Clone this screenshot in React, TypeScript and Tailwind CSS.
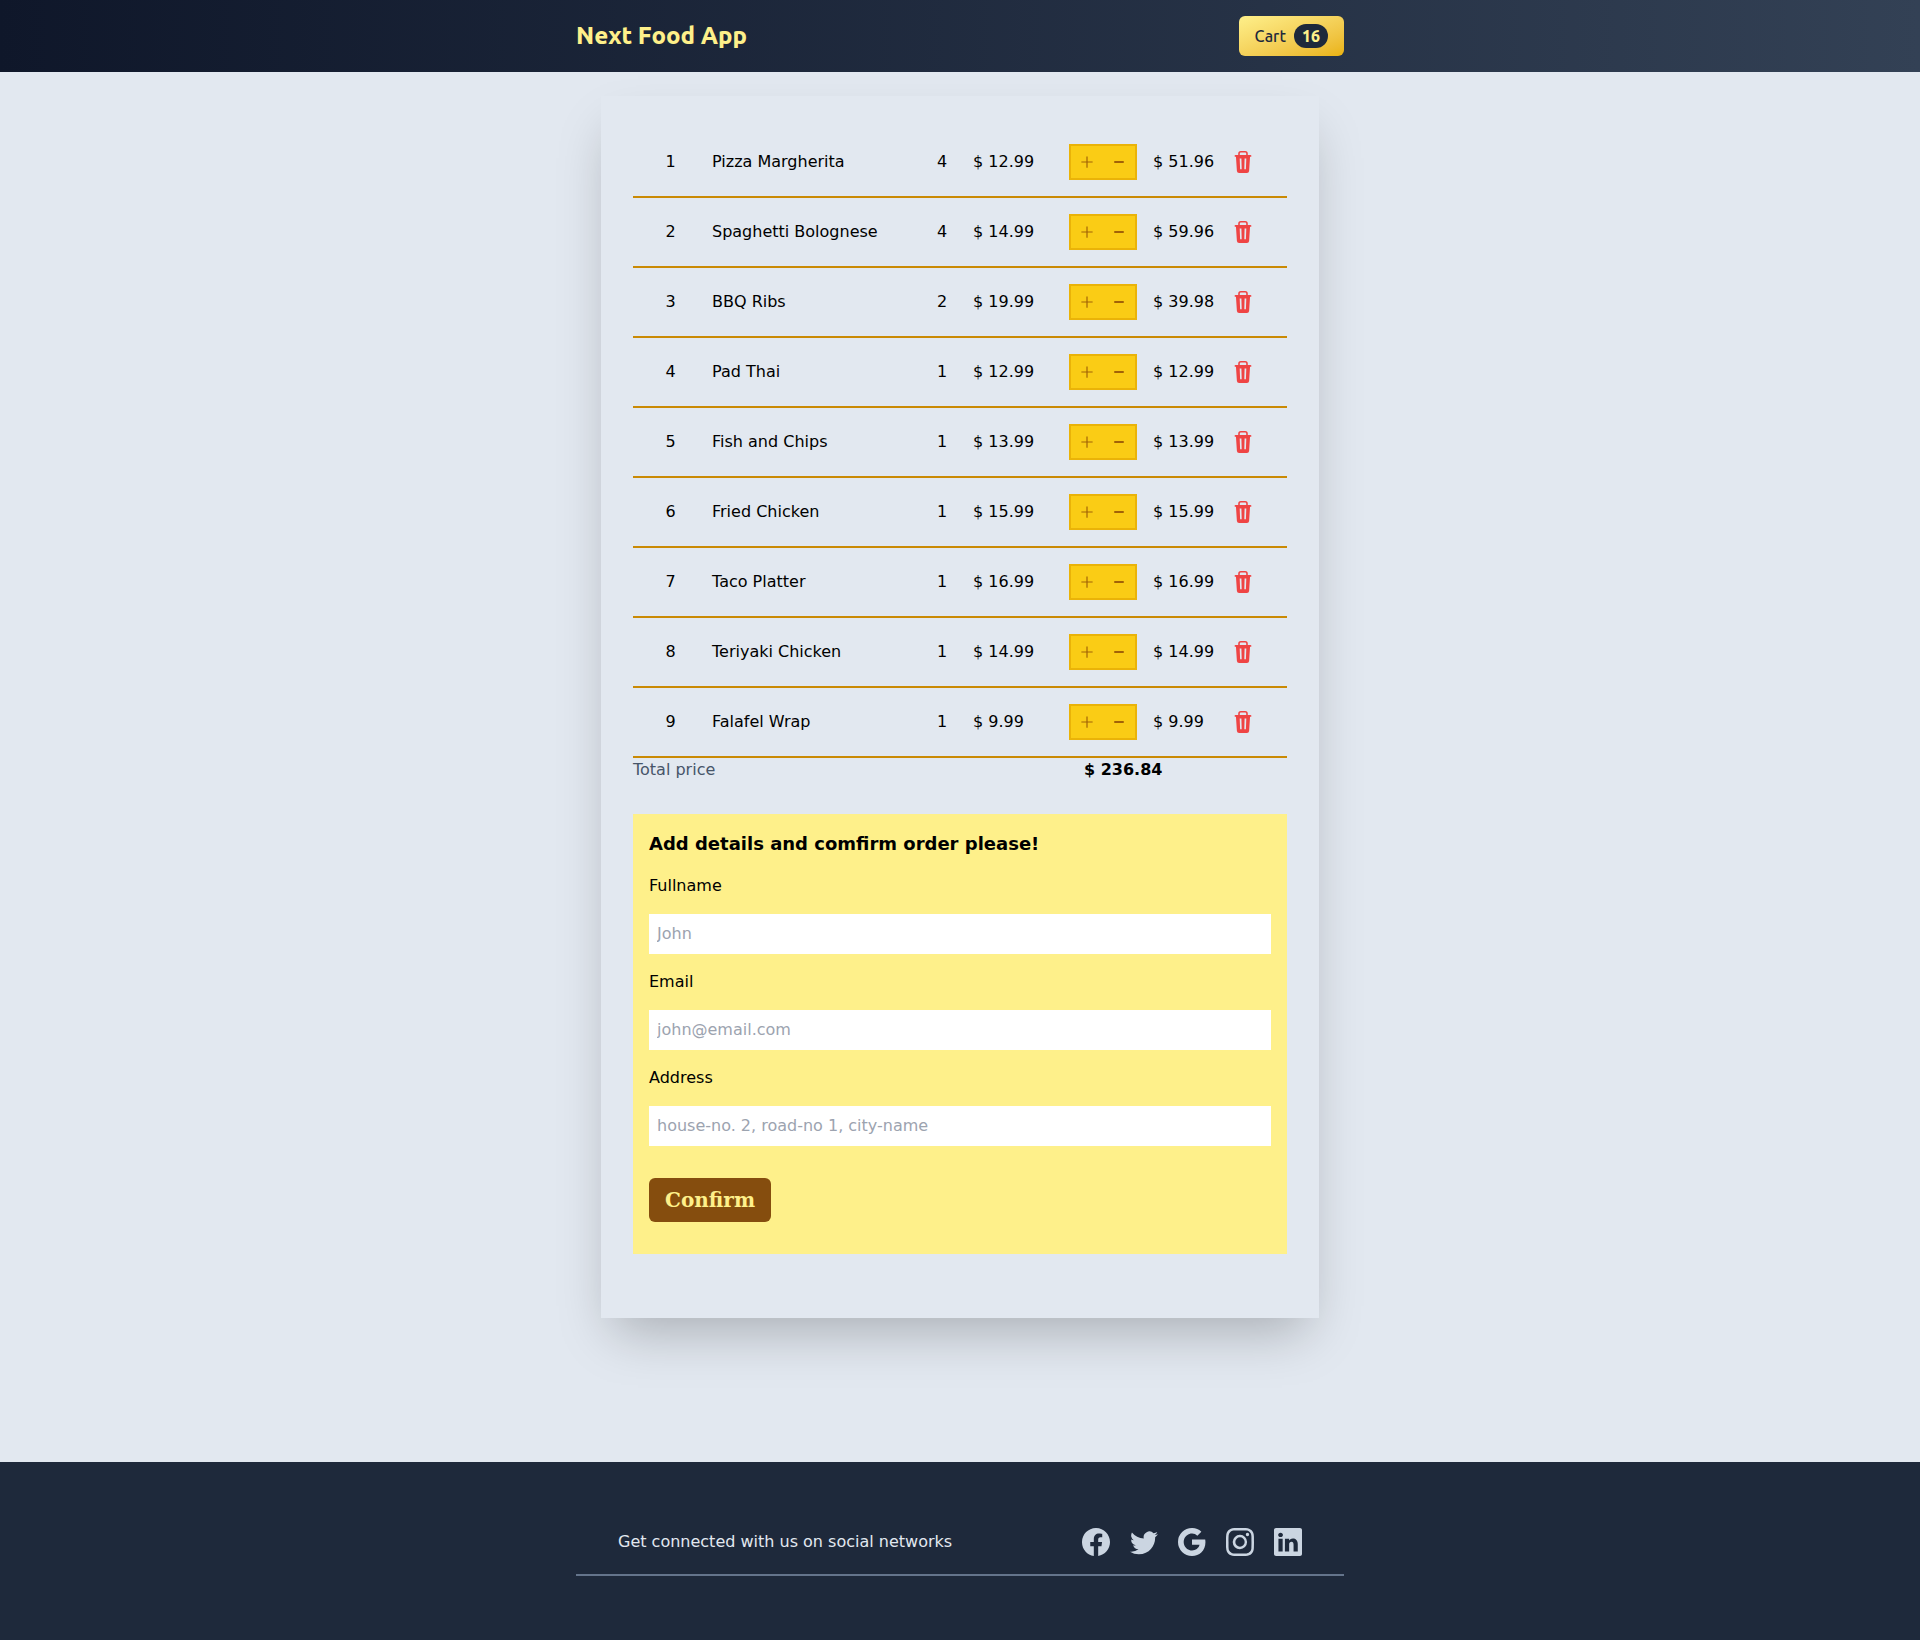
import React from "react";
import { BsFacebook, BsTwitter, BsGoogle, BsInstagram, BsLinkedin } from "react-icons/bs";
import { AiOutlinePlus } from "react-icons/ai";
import { HiMinusSm } from "react-icons/hi";

type CartItem = { name: string; quantity: number; price: number };

const items: CartItem[] = [
  { name: "Pizza Margherita", quantity: 4, price: 12.99 },
  { name: "Spaghetti Bolognese", quantity: 4, price: 14.99 },
  { name: "BBQ Ribs", quantity: 2, price: 19.99 },
  { name: "Pad Thai", quantity: 1, price: 12.99 },
  { name: "Fish and Chips", quantity: 1, price: 13.99 },
  { name: "Fried Chicken", quantity: 1, price: 15.99 },
  { name: "Taco Platter", quantity: 1, price: 16.99 },
  { name: "Teriyaki Chicken", quantity: 1, price: 14.99 },
  { name: "Falafel Wrap", quantity: 1, price: 9.99 },
];

const fields = [
  { id: "fullname", label: "Fullname", type: "text", placeholder: "John" },
  { id: "email", label: "Email", type: "email", placeholder: "john@email.com" },
  { id: "address", label: "Address", type: "text", placeholder: "house-no. 2, road-no 1, city-name" },
];

const socials = [
  { name: "Facebook", Icon: BsFacebook },
  { name: "Twitter", Icon: BsTwitter },
  { name: "Google", Icon: BsGoogle },
  { name: "Instagram", Icon: BsInstagram },
  { name: "LinkedIn", Icon: BsLinkedin },
];

const money = (value: number) => `$ ${value.toFixed(2)}`;

function TrashIcon() {
  return (
    <svg viewBox="0 0 24 24" className="size-6" fill="none" stroke="currentColor" aria-hidden="true">
      <path d="M8 5.5V3.6Q8 1.8 9.8 1.8h4.4Q16 1.8 16 3.6v1.9" strokeWidth="1.6" />
      <path d="M4.5 5.9h15" strokeWidth="1.8" strokeLinecap="round" />
      <path
        fill="currentColor"
        stroke="none"
        fillRule="evenodd"
        d="M4.9 6h14.2l-1 14.9Q17.9 23 15.9 23H8.1Q6.1 23 5.9 20.9zM8.7 8.4l.4 10.8h1.6L10.4 8.4zM13.6 8.4l-.3 10.8h1.6l.4-10.8z"
      />
    </svg>
  );
}

function Header({ count }: { count: number }) {
  return (
    <header className="bg-linear-to-r from-[#0f172a] to-[#334155] px-4 py-4 font-['Ubuntu','Noto_Sans',sans-serif]">
      <div className="mx-auto flex w-full max-w-3xl items-center justify-between">
        <a href="#" className="text-2xl font-extrabold text-[#fef08a]">
          Next Food App
        </a>
        <button
          type="button"
          className="flex h-10 items-center gap-2 rounded-md bg-linear-to-br from-[#fef08a] to-[#eab308] px-4 font-medium text-[#1e293b]"
        >
          Cart
          <span className="rounded-full bg-[#1e293b] px-2 font-extrabold text-[#fef08a]">{count}</span>
        </button>
      </div>
    </header>
  );
}

function CartTable() {
  const total = items.reduce((sum, item) => sum + item.price * item.quantity, 0);
  return (
    <table className="w-full table-fixed border-separate border-spacing-0 text-left">
      <colgroup>
        <col className="w-[75px]" />
        <col />
        <col className="w-[30px]" />
        <col className="w-24" />
        <col className="w-[100px]" />
        <col className="w-16" />
        <col className="w-[70px]" />
      </colgroup>
      <tbody>
        {items.map((item, index) => (
          <tr key={item.name} className="h-[70px] *:border-b-2 *:border-[#ca8a04]">
            <td className="text-center">{index + 1}</td>
            <td className="pl-1">{item.name}</td>
            <td className="text-center">{item.quantity}</td>
            <td className="pl-4">{money(item.price)}</td>
            <td className="px-4">
              <div className="flex w-[68px] border-2 border-[#eab308] bg-[#facc15] text-[#a16207]">
                <button type="button" aria-label={`Add one ${item.name}`} className="flex size-8 items-center justify-center">
                  <AiOutlinePlus className="size-4" />
                </button>
                <button type="button" aria-label={`Remove one ${item.name}`} className="flex size-8 items-center justify-center">
                  <HiMinusSm className="size-5" />
                </button>
              </div>
            </td>
            <td className="whitespace-nowrap">{money(item.price * item.quantity)}</td>
            <td className="pl-[14px]">
              <button type="button" aria-label={`Delete ${item.name}`} className="block text-[#ef4444]">
                <TrashIcon />
              </button>
            </td>
          </tr>
        ))}
      </tbody>
      <tfoot>
        <tr>
          <td colSpan={4} className="text-[#475569]">
            Total price
          </td>
          <td colSpan={3} className="pl-[31px] font-bold">
            {money(total)}
          </td>
        </tr>
      </tfoot>
    </table>
  );
}

function OrderForm() {
  return (
    <form className="mt-8 flex flex-col gap-4 bg-[#fef08a] px-4 pt-4 pb-8">
      <h2 className="text-lg leading-7 font-bold">Add details and comfirm order please!</h2>
      {fields.map((field) => (
        <React.Fragment key={field.id}>
          <label htmlFor={field.id}>{field.label}</label>
          <input
            id={field.id}
            type={field.type}
            placeholder={field.placeholder}
            className="w-full bg-white p-2 placeholder:text-[#9ca3af]"
          />
        </React.Fragment>
      ))}
      <button
        type="button"
        className="mt-4 self-start rounded-md bg-[#854d0e] px-4 py-2 font-['DejaVu_Serif',serif] text-xl leading-7 font-bold text-[#fef08a]"
      >
        Confirm
      </button>
    </form>
  );
}

function Footer() {
  return (
    <footer className="bg-[#1e293b] px-4 pt-12 pb-16">
      <div className="mx-auto flex w-full max-w-3xl items-center justify-between border-b-2 border-[#64748b] px-[42px] py-4">
        <p className="text-[#e2e8f0]">Get connected with us on social networks</p>
        <nav className="flex h-8 items-center gap-5 text-[#cbd5e1]" aria-label="Social networks">
          {socials.map(({ name, Icon }) => (
            <a key={name} href="#" aria-label={name}>
              <Icon className="size-7" />
            </a>
          ))}
        </nav>
      </div>
    </footer>
  );
}

export default function App() {
  const count = items.reduce((sum, item) => sum + item.quantity, 0);
  return (
    <div className="flex min-h-screen flex-col bg-[#e2e8f0] font-['DejaVu_Sans',sans-serif] text-black">
      <Header count={count} />
      <main className="flex-1 px-4 pt-6 pb-36">
        <section className="mx-auto w-full max-w-[718px] bg-[#e2e8f0] px-8 pt-8 pb-16 shadow-2xl">
          <CartTable />
          <OrderForm />
        </section>
      </main>
      <Footer />
    </div>
  );
}
